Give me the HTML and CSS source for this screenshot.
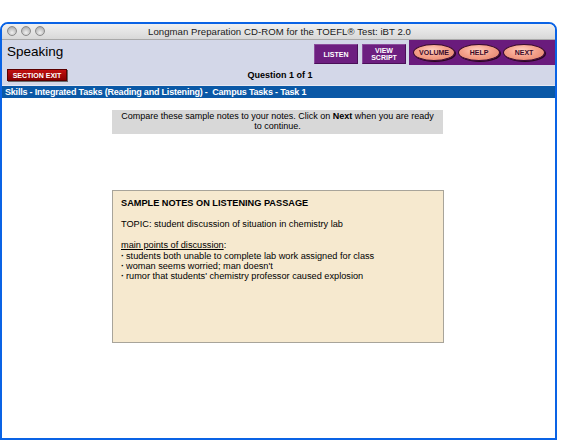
FILE: index.html
```html
<!DOCTYPE html>
<html>
<head>
<meta charset="utf-8">
<link rel="stylesheet" href="styles.css">
</head>
<body>
<div class="window">
  <div class="titlebar">
    <div class="lights"><span class="light"></span><span class="light"></span><span class="light"></span></div>
    <div class="title">Longman Preparation CD-ROM for the TOEFL® Test: iBT 2.0</div>
  </div>
  <div class="toolbar">
    <div class="row1">
      <div class="section-name">Speaking</div>
      <div class="sq-buttons">
        <div class="sq-btn">LISTEN</div>
        <div class="sq-btn two">VIEW<br>SCRIPT</div>
      </div>
      <div class="panel">
        <div class="oval">VOLUME</div>
        <div class="oval">HELP</div>
        <div class="oval">NEXT</div>
      </div>
    </div>
    <div class="row2">
      <div class="exit-btn">SECTION EXIT</div>
      <div class="question">Question 1 of 1</div>
    </div>
  </div>
  <div class="crumb">Skills - Integrated Tasks (Reading and Listening) -&nbsp; Campus Tasks - Task 1</div>
  <div class="content">
    <div class="instruction">Compare these sample notes to your notes. Click on <b>Next</b> when you are ready to continue.</div>
    <div class="notes">
      <p class="heading">SAMPLE NOTES ON LISTENING PASSAGE</p>
      <p>TOPIC: student discussion of situation in chemistry lab</p>
      <p class="points"><span class="u">main points of discussion</span>:</p>
      <ul>
        <li>students both unable to complete lab work assigned for class</li>
        <li>woman seems worried; man doesn't</li>
        <li>rumor that students' chemistry professor caused explosion</li>
      </ul>
    </div>
  </div>
</div>
</body>
</html>
```
FILE: styles.css
```css
html, body {
  margin: 0;
  padding: 0;
  background: #ffffff;
}
body {
  font-family: "Liberation Sans", Arial, sans-serif;
  color: #000;
}
.window {
  margin-top: 22px;
  width: 557px;
  height: 418px;
  box-sizing: border-box;
  border: 2px solid #0a63e5;
  border-radius: 8px 8px 0 0;
  overflow: hidden;
  display: flex;
  flex-direction: column;
  background: #fff;
}
.titlebar {
  height: 15px;
  flex: none;
  position: relative;
  background: linear-gradient(#f0f0f0, #d8d8d8);
  border-bottom: 1px solid #a8a8a8;
  display: flex;
  align-items: center;
  justify-content: center;
}
.lights {
  position: absolute;
  left: 5px;
  top: 2px;
  display: flex;
  gap: 4px;
}
.light {
  width: 10px;
  height: 10px;
  border-radius: 50%;
  box-sizing: border-box;
  border: 1px solid #8a8a8a;
  background: radial-gradient(circle at 50% 70%, #f0f0f0 0%, #c4c4c4 55%, #9a9a9a 100%);
}
.title {
  font-size: 9.6px;
  color: #1a1a1a;
  letter-spacing: 0.05px;
  margin-left: 2px;
}
.toolbar {
  flex: none;
  background: #d3d7e8;
  border-bottom: 1px solid #e6e8f2;
}
.row1 {
  height: 25px;
  display: flex;
  align-items: stretch;
}
.section-name {
  font-size: 13.5px;
  padding-left: 5px;
  padding-top: 4px;
  flex: 1;
}
.sq-buttons {
  display: flex;
  gap: 4px;
  padding-top: 4px;
  padding-right: 3px;
}
.sq-btn {
  width: 44px;
  height: 20px;
  box-sizing: border-box;
  background: #6d1f80;
  border: 1px solid #8c4d9c;
  border-right-color: #4a0f58;
  border-bottom-color: #4a0f58;
  color: #fff;
  font-weight: bold;
  font-size: 7px;
  line-height: 7px;
  text-align: center;
  display: flex;
  align-items: center;
  justify-content: center;
}
.panel {
  width: 146px;
  margin-top: -1px;
  background: #6a1b7c;
  display: flex;
  align-items: center;
  padding-left: 4px;
  gap: 3px;
  box-sizing: border-box;
}
.oval {
  width: 42px;
  height: 17px;
  box-sizing: border-box;
  border-radius: 50%;
  background: radial-gradient(ellipse at 45% 35%, #ffd0c0 0%, #f5a28c 45%, #e07e66 100%);
  border: 1px solid #3a0c2e;
  box-shadow: 1px 1px 0 #2a0620;
  color: #3b0a2a;
  font-weight: bold;
  font-size: 7px;
  display: flex;
  align-items: center;
  justify-content: center;
}
.row2 {
  height: 20px;
  position: relative;
  display: flex;
  align-items: center;
}
.exit-btn {
  margin-left: 5px;
  width: 60px;
  height: 12px;
  box-sizing: border-box;
  background: linear-gradient(#c21010, #8a0000);
  border: 1px solid #5a0000;
  box-shadow: 1px 1px 0 #6a6a6a;
  color: #fff;
  font-size: 7px;
  font-weight: bold;
  display: flex;
  align-items: center;
  justify-content: center;
}
.question {
  position: absolute;
  left: 0;
  right: 0;
  top: 5px;
  text-align: center;
  font-size: 9px;
  font-weight: bold;
  padding-left: 3px;
}
.crumb {
  flex: none;
  height: 12px;
  background: #0a58a6;
  color: #fff;
  font-size: 9px;
  font-weight: bold;
  line-height: 12px;
  padding-left: 3px;
  letter-spacing: -0.2px;
  white-space: nowrap;
}
.content {
  flex: 1;
  display: flex;
  flex-direction: column;
  align-items: flex-start;
  padding-left: 110px;
}
.instruction {
  margin-top: 12px;
  width: 331px;
  box-sizing: border-box;
  background: #d8d8d8;
  font-size: 9px;
  line-height: 9.5px;
  text-align: center;
  padding: 2px 8px 3px;
}
.notes {
  margin-top: 56px;
  width: 332px;
  height: 153px;
  box-sizing: border-box;
  background: #f6e9cf;
  border: 1px solid #a8a49a;
  padding: 7px 8px;
  font-size: 9.2px;
  line-height: 10.5px;
}
.notes p {
  margin: 0 0 10.5px;
}
.notes p.points {
  margin: 0;
}
.notes .heading {
  font-weight: bold;
}
.u {
  text-decoration: underline;
}
.notes ul {
  margin: 0;
  padding: 0;
  list-style: none;
  line-height: 10px;
}
.notes li {
  position: relative;
  padding-left: 5px;
}
.notes li::before {
  content: "·";
  position: absolute;
  left: 0;
  font-weight: bold;
}
```
